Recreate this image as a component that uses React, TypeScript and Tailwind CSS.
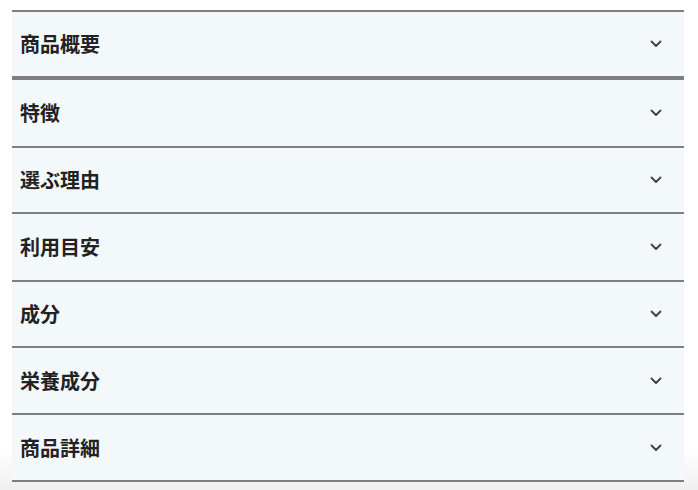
const sections = ['商品概要', '特徴', '選ぶ理由', '利用目安', '成分', '栄養成分', '商品詳細']

// row heights taken from the screenshot (includes the 2px top rule)
const rowHeights = ['h-[70px]', 'h-[66px]', 'h-[66px]', 'h-[68px]', 'h-[66px]', 'h-[67px]', 'h-[67px]']

function Chevron() {
  return (
    <svg width="12" height="8" viewBox="0 0 12 8" fill="none" className="flex-shrink-0">
      <path d="M1.5 1.5 L6 6 L10.5 1.5" stroke="#3f3f46" strokeWidth="1.8" strokeLinecap="round" strokeLinejoin="round" />
    </svg>
  )
}

export default function App() {
  return (
    <div
      className="w-[698px] h-[490px] overflow-hidden pt-[10px] px-[12px] bg-gradient-to-b from-white via-white via-[92%] to-[#efefef]"
      style={{ fontFamily: '"Noto Sans CJK JP", "Noto Sans", sans-serif' }}
    >
      <div className="w-[672px] border-b-2 border-[#7f7f7f]">
        {sections.map((title, idx) => (
          <button
            key={title}
            className={
              'w-full flex items-center justify-between pl-[8px] pr-[22px] bg-[#f3f8fb] border-[#7f7f7f] ' +
              rowHeights[idx] + ' ' +
              (idx === 0 ? 'border-t-2 border-b-4' : idx === 1 ? '' : 'border-t-2')
            }
          >
            <span className="text-[20px] font-bold text-[#222] leading-none">{title}</span>
            <Chevron />
          </button>
        ))}
      </div>
    </div>
  )
}
